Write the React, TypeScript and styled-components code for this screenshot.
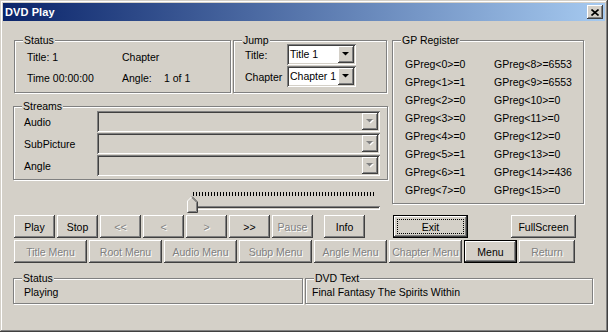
import React from 'react';
import styled, { createGlobalStyle, css } from 'styled-components';

const GlobalStyle = createGlobalStyle`
  html, body {
    margin: 0;
    padding: 0;
    background: #d4d0c8;
  }
  body {
    font-family: "Liberation Sans", Arial, sans-serif;
    font-size: 10.5px;
    color: #000;
  }
  * { box-sizing: border-box; }
`;

const raised = css`
  box-shadow: inset -1px -1px #404040, inset 1px 1px #fff, inset -2px -2px #808080, inset 2px 2px #d4d0c8;
`;

const Window = styled.div`
  width: 608px;
  height: 332px;
  background: #d4d0c8;
  padding: 3px;
  box-shadow: inset -1px -1px #404040, inset 1px 1px #d4d0c8, inset -2px -2px #808080, inset 2px 2px #fff;
  display: flex;
  flex-direction: column;
`;

const TitleBar = styled.div`
  height: 18px;
  display: flex;
  align-items: center;
  justify-content: space-between;
  padding: 0 2px 0 2px;
  background: linear-gradient(to right, #0a246a, #a6caf0);
`;

const TitleText = styled.span`
  color: #fff;
  font-weight: bold;
  font-size: 11px;
  letter-spacing: 0.1px;
`;

const CloseBtn = styled.div`
  width: 16px;
  height: 14px;
  background: #d4d0c8;
  display: flex;
  align-items: center;
  justify-content: center;
  ${raised}
`;

const Body = styled.div`
  flex: 1;
  display: flex;
  flex-direction: column;
  padding: 19px 0 0 10px;
`;

const TopSection = styled.div`
  display: flex;
  gap: 4px;
  height: 174px;
`;

const LeftColumn = styled.div`
  width: 375px;
  display: flex;
  flex-direction: column;
`;

const TopRow = styled.div`
  display: flex;
  gap: 2px;
  padding-left: 1px;
`;

const Group = styled.div<{ $w: number; $h: number; $mt?: number }>`
  position: relative;
  width: ${(p) => p.$w}px;
  height: ${(p) => p.$h}px;
  margin-top: ${(p) => p.$mt ?? 0}px;
  border: 1px solid #808080;
  box-shadow: 1px 1px 0 #fff, inset 1px 1px 0 #fff;
  flex-shrink: 0;
`;

const GroupLabel = styled.span`
  position: absolute;
  top: -7px;
  left: 8px;
  padding: 0 1px;
  line-height: 13px;
  background: #d4d0c8;
`;

const StatusGrid = styled.div`
  display: grid;
  grid-template-columns: 95px auto;
  grid-auto-rows: 21px;
  line-height: 21px;
  padding: 6px 0 0 12px;
`;

const AngleLabel = styled.span`
  display: inline-block;
  width: 42px;
`;

const JumpGrid = styled.div`
  display: grid;
  grid-template-columns: 42px 69px;
  grid-auto-rows: 21px;
  row-gap: 1px;
  align-items: center;
  padding: 3px 0 0 11px;
`;

const StreamsGrid = styled.div`
  display: grid;
  grid-template-columns: 73px 283px;
  grid-auto-rows: 21px;
  row-gap: 1px;
  align-items: center;
  padding: 4px 0 0 10px;
`;

const ComboBox = styled.div<{ $disabled?: boolean }>`
  height: 21px;
  display: flex;
  align-items: stretch;
  padding: 2px;
  background: ${(p) => (p.$disabled ? '#d4d0c8' : '#fff')};
  box-shadow: inset 1px 1px #808080, inset -1px -1px #fff, inset 2px 2px #404040, inset -2px -2px #d4d0c8;
`;

const ComboText = styled.span`
  flex: 1;
  padding-left: 1px;
  line-height: 17px;
  white-space: nowrap;
  overflow: hidden;
`;

const ComboArrow = styled.div`
  width: 16px;
  flex-shrink: 0;
  background: #d4d0c8;
  display: flex;
  align-items: center;
  justify-content: center;
  ${raised}
`;

const GPGrid = styled.div`
  display: grid;
  grid-template-columns: 89px auto;
  grid-auto-flow: column;
  grid-template-rows: repeat(8, 18px);
  line-height: 18px;
  padding: 14px 0 0 12px;
`;

const SliderWrap = styled.div`
  position: relative;
  width: 195px;
  height: 26px;
  margin: 8px 0 0 173px;
`;

const Ticks = styled.div`
  width: 183px;
  height: 4px;
  margin: 4px 0 0 7px;
  background: repeating-linear-gradient(to right, #000 0 1px, transparent 1px 3px);
`;

const Track = styled.div`
  width: 192px;
  height: 4px;
  margin: 10px 0 0 2px;
  box-shadow: inset 1px 1px #808080, inset -1px -1px #fff, inset 2px 2px #404040, inset -2px -2px #d4d0c8;
`;

const Thumb = styled.svg`
  position: absolute;
  left: 1px;
  top: 8px;
`;

const ButtonRow = styled.div<{ $mt: number }>`
  display: flex;
  margin-top: ${(p) => p.$mt}px;
`;

const ButtonGroup = styled.div<{ $w?: number; $between?: boolean }>`
  display: flex;
  gap: 2px;
  padding-left: 1px;
  width: ${(p) => (p.$w ? `${p.$w}px` : 'auto')};
  justify-content: ${(p) => (p.$between ? 'space-between' : 'flex-start')};
`;

const Button = styled.div<{ $w: number; $disabled?: boolean; $default?: boolean; $focus?: boolean; $ml?: number }>`
  position: relative;
  width: ${(p) => p.$w}px;
  height: 23px;
  margin-left: ${(p) => p.$ml ?? 0}px;
  background: #d4d0c8;
  display: flex;
  align-items: center;
  justify-content: center;
  white-space: nowrap;
  flex-shrink: 0;
  color: ${(p) => (p.$disabled ? '#808080' : '#000')};
  text-shadow: ${(p) => (p.$disabled ? '1px 1px 0 #fff' : 'none')};
  ${(p) =>
    p.$default
      ? css`
          box-shadow: inset 0 0 0 1px #000, inset -2px -2px #404040, inset 2px 2px #fff, inset -3px -3px #808080;
        `
      : raised}
  ${(p) =>
    p.$focus &&
    css`
      &::after {
        content: '';
        position: absolute;
        inset: 4px;
        border: 1px dotted #000;
      }
    `}
`;

const BottomRow = styled.div`
  display: flex;
  gap: 2px;
  margin-top: 15px;
`;

const BottomText = styled.div<{ $pl: number }>`
  padding: 6px 0 0 ${(p) => p.$pl}px;
  line-height: 14px;
`;

const Arrow = ({ disabled }: { disabled?: boolean }) => (
  <svg width="8" height="5" viewBox="0 0 8 5">
    {disabled && <path d="M1 1h7L4.5 4.5z" fill="#fff" />}
    <path d="M0 0h7L3.5 3.5z" fill={disabled ? '#808080' : '#000'} />
  </svg>
);

const Combo = ({ text, disabled }: { text?: string; disabled?: boolean }) => (
  <ComboBox $disabled={disabled}>
    <ComboText>{text}</ComboText>
    <ComboArrow>
      <Arrow disabled={disabled} />
    </ComboArrow>
  </ComboBox>
);

const gpLeft = ['0', '1', '0', '0', '0', '1', '1', '0'];
const gpRight = ['6553', '6553', '0', '0', '0', '0', '436', '0'];

export default function App() {
  return (
    <>
      <GlobalStyle />
      <Window>
        <TitleBar>
          <TitleText>DVD Play</TitleText>
          <CloseBtn>
            <svg width="8" height="7" viewBox="0 0 8 7">
              <path d="M0.5 0.5L7.5 6.5M7.5 0.5L0.5 6.5" stroke="#000" strokeWidth="1.6" />
            </svg>
          </CloseBtn>
        </TitleBar>
        <Body>
          <TopSection>
            <LeftColumn>
              <TopRow>
                <Group $w={217} $h={53}>
                  <GroupLabel>Status</GroupLabel>
                  <StatusGrid>
                    <span>Title: 1</span>
                    <span>Chapter</span>
                    <span>Time 00:00:00</span>
                    <span>
                      <AngleLabel>Angle:</AngleLabel>1 of 1
                    </span>
                  </StatusGrid>
                </Group>
                <Group $w={154} $h={53}>
                  <GroupLabel>Jump</GroupLabel>
                  <JumpGrid>
                    <span>Title:</span>
                    <Combo text="Title 1" />
                    <span>Chapter</span>
                    <Combo text="Chapter 1" />
                  </JumpGrid>
                </Group>
              </TopRow>
              <Group $w={375} $h={74} $mt={13}>
                <GroupLabel>Streams</GroupLabel>
                <StreamsGrid>
                  <span>Audio</span>
                  <Combo disabled />
                  <span>SubPicture</span>
                  <Combo disabled />
                  <span>Angle</span>
                  <Combo disabled />
                </StreamsGrid>
              </Group>
              <SliderWrap>
                <Ticks />
                <Track />
                <Thumb width="11" height="17" viewBox="0 0 11 17">
                  <path d="M0.5 16.5V5L5 0.5L10.5 6V16.5Z" fill="#d4d0c8" />
                  <path d="M0.5 16V5L5 0.5" stroke="#fff" fill="none" />
                  <path d="M5 0.5L10.5 6V16.5H0.5" stroke="#404040" fill="none" />
                  <path d="M5 1.8L9.5 6.3V15.5H1.5" stroke="#808080" fill="none" />
                </Thumb>
              </SliderWrap>
            </LeftColumn>
            <Group $w={192} $h={164}>
              <GroupLabel>GP Register</GroupLabel>
              <GPGrid>
                {gpLeft.map((v, i) => (
                  <span key={`l${i}`}>{`GPreg<${i}>=${v}`}</span>
                ))}
                {gpRight.map((v, i) => (
                  <span key={`r${i}`}>{`GPreg<${i + 8}>=${v}`}</span>
                ))}
              </GPGrid>
            </Group>
          </TopSection>
          <ButtonRow $mt={1}>
            <ButtonGroup $w={379}>
              <Button $w={41}>Play</Button>
              <Button $w={41}>Stop</Button>
              <Button $w={41} $disabled>&lt;&lt;</Button>
              <Button $w={41} $disabled>&lt;</Button>
              <Button $w={41} $disabled>&gt;</Button>
              <Button $w={41}>&gt;&gt;</Button>
              <Button $w={41} $disabled>Pause</Button>
              <Button $w={41} $ml={9}>Info</Button>
            </ButtonGroup>
            <ButtonGroup $w={184} $between>
              <Button $w={75} $default $focus>Exit</Button>
              <Button $w={65}>FullScreen</Button>
            </ButtonGroup>
          </ButtonRow>
          <ButtonRow $mt={2}>
            <ButtonGroup>
              <Button $w={73} $disabled>Title Menu</Button>
              <Button $w={73} $disabled>Root Menu</Button>
              <Button $w={73} $disabled>Audio Menu</Button>
              <Button $w={73} $disabled>Subp Menu</Button>
              <Button $w={73} $disabled>Angle Menu</Button>
              <Button $w={73} $disabled>Chapter Menu</Button>
              <Button $w={53} $default>Menu</Button>
              <Button $w={56} $disabled>Return</Button>
            </ButtonGroup>
          </ButtonRow>
          <BottomRow>
            <Group $w={290} $h={26}>
              <GroupLabel>Status</GroupLabel>
              <BottomText $pl={10}>Playing</BottomText>
            </Group>
            <Group $w={288} $h={26}>
              <GroupLabel>DVD Text</GroupLabel>
              <BottomText $pl={6}>Final Fantasy The Spirits Within</BottomText>
            </Group>
          </BottomRow>
        </Body>
      </Window>
    </>
  );
}
